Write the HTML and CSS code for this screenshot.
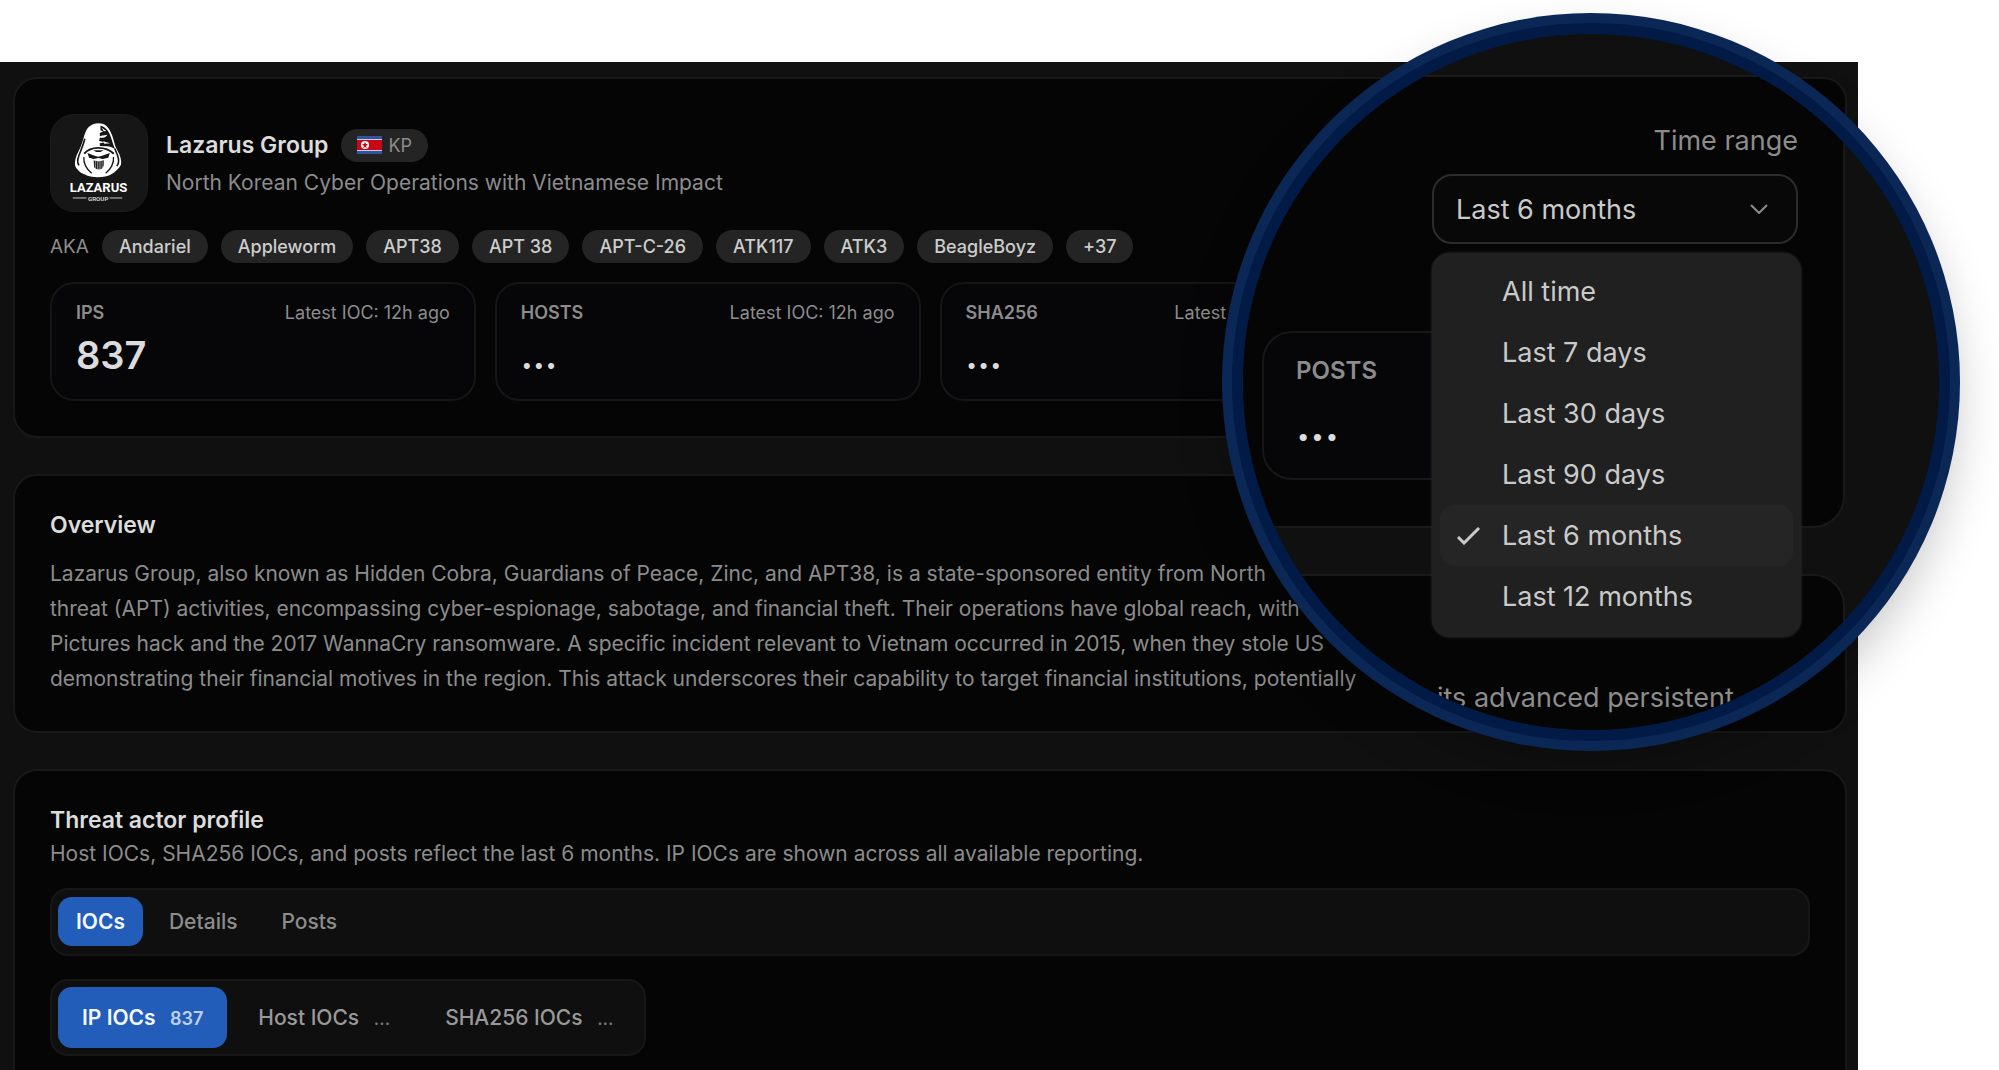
FILE: index.html
```html
<!DOCTYPE html>
<html lang="en">
<head>
  <meta charset="utf-8">
  <title>Lazarus Group</title>
  <link rel="stylesheet" href="styles.css">
</head>
<body>
  <main class="panel">
    <section class="card">
      <div class="actor">
        <div class="avatar">
          <svg viewBox="30 27 295 295" role="img" aria-label="Lazarus Group logo">
            <path fill="#fff" d="M176 52c-22 0-36 12-43 36-5 19-9 32-18 50-9 16-13 32-11 44 4 12 16 22 30 28 10 6 24 8 40 8s30-2 40-8c14-8 25-18 31-30 3-14-2-28-11-44-9-15-10-30-16-46-9-25-20-38-42-38z"/>
            <path fill="#161616" d="M182 60c15 3 24 14 31 32 5 14 8 26 14 40-8-6-16-8-26-9l-21-1v-8l16-3-18-4 2-10 14-2-14-4v-9l10-4-8-4z"/>
            <path fill="#fff" d="M186 66l14 10-8 1zM184 91l20-3-8 7-12 2zM190 108l22 6-18 1z"/>
            <path fill="none" stroke="#161616" stroke-width="5" d="M134 100c-6 22-14 40-19 54-4 10-4 20 1 28"/>
            <path fill="none" stroke="#161616" stroke-width="5" d="M226 130c5 12 9 20 11 30 2 10 0 18-5 24"/>
            <path fill="none" stroke="#161616" stroke-width="6" d="M132 146c10-12 24-18 43-18s36 6 48 18"/>
            <path fill="#161616" d="M142 144l22 8 11 3 12-3 24-8-5 14-17 4-14-3-14 3-14-4zM160 135h32l-10 6h-13z"/>
            <path fill="#888" d="M160 166l16 3 17-3-3 22-7 6h-13l-7-6z"/>
            <path fill="none" stroke="#161616" stroke-width="3" d="M164 168v20M170 169v24M177 170v24M184 169v24M190 167v18"/>
            <path fill="none" stroke="#161616" stroke-width="4" d="M131 156c-2 18 8 38 24 50M222 156c2 18-8 38-24 50"/>
            <path stroke="#ccc" stroke-width="3" d="M97 282h42M210 282h39"/>
            <text class="logo-name" x="176" y="265" text-anchor="middle">LAZARUS</text>
            <text class="logo-sub" x="175" y="290" text-anchor="middle">GROUP</text>
          </svg>
        </div>
        <div>
          <div class="name-row">
            <h1>Lazarus Group</h1>
            <span class="country">
              <svg class="flag" viewBox="0 0 25 18" aria-hidden="true">
                <path fill="#3153a0" d="M0 0h25v18H0z"/>
                <path fill="#c9cedd" d="M0 3h25v12H0z"/>
                <path fill="#c80815" d="M0 4h25v10H0z"/>
                <circle cx="8" cy="9" r="4" fill="#fff"/>
                <path fill="#c80815" d="M8 6l1 2h2l-2 2 1 2-2-1-2 1 1-2-2-2h2z"/>
              </svg>
              KP
            </span>
          </div>
          <p class="tagline">North Korean Cyber Operations with Vietnamese Impact</p>
        </div>
      </div>

      <div class="aliases">
        <span class="aka">AKA</span>
        <span class="chip">Andariel</span>
        <span class="chip">Appleworm</span>
        <span class="chip">APT38</span>
        <span class="chip">APT 38</span>
        <span class="chip">APT-C-26</span>
        <span class="chip">ATK117</span>
        <span class="chip">ATK3</span>
        <span class="chip">BeagleBoyz</span>
        <span class="chip">+37</span>
      </div>

      <div class="stats">
        <div class="stat">
          <div class="stat-head"><b>IPS</b><span>Latest IOC: 12h ago</span></div>
          <div class="stat-value">837</div>
        </div>
        <div class="stat">
          <div class="stat-head"><b>HOSTS</b><span>Latest IOC: 12h ago</span></div>
          <div class="stat-value">...</div>
        </div>
        <div class="stat">
          <div class="stat-head"><b>SHA256</b><span>Latest IOC: 12h ago</span></div>
          <div class="stat-value">...</div>
        </div>
        <div class="stat"></div>
      </div>
    </section>

    <section class="card">
      <h2>Overview</h2>
      <p class="overview">
        Lazarus Group, also known as Hidden Cobra, Guardians of Peace, Zinc, and APT38, is a state-sponsored entity from North<br>
        threat (APT) activities, encompassing cyber-espionage, sabotage, and financial theft. Their operations have global reach, with<br>
        Pictures hack and the 2017 WannaCry ransomware. A specific incident relevant to Vietnam occurred in 2015, when they stole US<br>
        demonstrating their financial motives in the region. This attack underscores their capability to target financial institutions, potentially
      </p>
    </section>

    <section class="card card-last">
      <h2>Threat actor profile</h2>
      <p class="note">Host IOCs, SHA256 IOCs, and posts reflect the last 6 months. IP IOCs are shown across all available reporting.</p>
      <div class="tabs">
        <button class="tab active">IOCs</button>
        <button class="tab">Details</button>
        <button class="tab">Posts</button>
      </div>
      <div class="subtabs">
        <button class="subtab active">IP IOCs <span>837</span></button>
        <button class="subtab">Host IOCs <span>...</span></button>
        <button class="subtab">SHA256 IOCs <span>...</span></button>
      </div>
    </section>
  </main>

  <!-- magnifier over the time range filter -->
  <aside class="lens">
    <div class="lens-view">
      <div class="lens-card">
        <div class="range">
          <label for="range">Time range</label>
          <div class="select-wrap">
            <select id="range">
              <option>All time</option>
              <option>Last 7 days</option>
              <option>Last 30 days</option>
              <option>Last 90 days</option>
              <option selected>Last 6 months</option>
              <option>Last 12 months</option>
            </select>
            <svg class="chevron" viewBox="0 0 18 10" aria-hidden="true"><path d="M1 1l8 8 8-8"/></svg>
            <ul class="menu">
              <li>All time</li>
              <li>Last 7 days</li>
              <li>Last 30 days</li>
              <li>Last 90 days</li>
              <li class="picked">
                <svg class="check" viewBox="0 0 24 18" aria-hidden="true"><path d="M1 10l6 6L22 1"/></svg>
                Last 6 months
              </li>
              <li>Last 12 months</li>
            </ul>
          </div>
        </div>
        <div class="lens-stat">
          <b>POSTS</b>
          <div class="lens-value">...</div>
        </div>
      </div>
      <div class="lens-card">
        <p>its advanced persistent</p>
      </div>
    </div>
  </aside>
</body>
</html>
```
FILE: styles.css
```css
* { box-sizing: border-box; }

body {
  margin: 0;
  min-height: 100vh;
  position: relative;
  display: flex;
  flex-direction: column;
  overflow: hidden;
  background: #fff;
  color: #dcdcdc;
  font-family: Inter, "Liberation Sans", sans-serif;
}
h1, h2, p, ul { margin: 0; }
button, select { font-family: inherit; }

.panel {
  flex: 1;
  margin: 62px 141px 0 0;
  padding: 15px 11px 0 13px;
  display: flex;
  flex-direction: column;
  gap: 36px;
  background: #101010;
}
.card {
  padding: 35px;
  background: #050505;
  border: 2px solid #181818;
  border-radius: 24px;
}
.card-last { flex: 1; padding-bottom: 12px; border-bottom: 0; border-radius: 24px 24px 0 0; }

h1, h2 { font-size: 23px; line-height: 28px; font-weight: 600; }

.actor { display: flex; align-items: center; gap: 18px; }
.avatar { width: 98px; height: 98px; background: #161616; border: 1px solid #1b1b1b; border-radius: 24px; }
.avatar svg { display: block; width: 96px; height: 96px; }
.logo-name { font: bold 40px Roboto, sans-serif; fill: #fff; }
.logo-sub { font: bold 19px Roboto, sans-serif; fill: #ccc; }

.name-row { display: flex; align-items: center; gap: 13px; padding-top: 2px; }
.country {
  display: flex;
  align-items: center;
  gap: 6px;
  height: 33px;
  padding: 0 16px;
  border-radius: 17px;
  background: #242424;
  color: #8c8c8c;
  font-size: 18px;
}
.flag { width: 25px; height: 18px; }
.tagline { color: #8c8c8c; font-size: 21px; line-height: 34px; margin-top: 4px; }

.aliases { display: flex; align-items: center; gap: 13px; margin-top: 18px; }
.aka { color: #8c8c8c; font-size: 19px; }
.chip {
  padding: 0 17px;
  line-height: 33px;
  border-radius: 17px;
  background: #242424;
  color: #cdcdcd;
  font-size: 18px;
  font-weight: 500;
}

.stats { display: grid; grid-template-columns: repeat(4, 1fr); gap: 19px; margin-top: 19px; }
.stat { height: 119px; padding: 17px 24px; background: #060608; border: 2px solid #151515; border-radius: 24px; }
.stat-head { display: flex; justify-content: space-between; color: #8c8c8c; font-size: 18px; line-height: 24px; }
.stat-head b { font-weight: 600; }
.stat-value { margin-top: 8px; font-size: 38px; line-height: 44px; font-weight: 600; }

.overview { margin-top: 17px; color: #8c8c8c; font-size: 21px; line-height: 35px; white-space: nowrap; }
.note { margin-top: 2px; color: #8c8c8c; font-size: 21px; line-height: 36px; }

.tabs, .subtabs { display: flex; background: #0f0f0f; border: 2px solid #171717; border-radius: 18px; }
.tabs { margin-top: 16px; padding: 7px 6px 8px; gap: 8px; }
.subtabs { margin-top: 23px; padding: 6px; gap: 7px; width: fit-content; }
.tab, .subtab {
  border: 0;
  border-radius: 14px;
  background: none;
  color: #8c8c8c;
  font-size: 21px;
  font-weight: 500;
}
.tab { height: 49px; padding: 0 18px; }
.subtab { height: 61px; padding: 0 24px; color: #999; }
.subtab span { margin-left: 9px; font-size: 18px; opacity: 0.75; }
.tab.active, .subtab.active { background: #215db9; color: #f4f7fc; font-weight: 600; }

.lens {
  position: absolute;
  top: 13px;
  right: 39px;
  width: 738px;
  height: 738px;
  padding: 10px;
  border-radius: 50%;
  background: #0b2756;
  box-shadow: 0 22px 50px -6px rgba(0, 0, 0, 0.24);
}
.lens-view {
  height: 100%;
  padding: 41px 94px 0 18px;
  overflow: hidden;
  border: 11px solid #011a46;
  border-radius: 50%;
  background: #101010;
  font-size: 27px;
}
.lens-card {
  height: 453px;
  margin-left: -60px;
  padding: 30px 45px 0 59px;
  background: #050505;
  border: 2px solid #191919;
  border-radius: 32px;
}
.lens-card + .lens-card { margin-top: 46px; padding-top: 105px; padding-left: 234px; color: #8c8c8c; white-space: nowrap; }
.range { width: 366px; margin-left: auto; text-align: right; }
.range label { display: block; color: #8c8c8c; line-height: 67px; }
.select-wrap { position: relative; text-align: left; }
select {
  display: block;
  width: 100%;
  height: 70px;
  padding: 0 22px;
  appearance: none;
  background: #080808;
  border: 2px solid #2c2c2c;
  border-radius: 20px;
  color: #cacaca;
  font-size: 27px;
}
.chevron { position: absolute; top: 30px; right: 30px; width: 18px; height: 10px; }
.chevron path { fill: none; stroke: #8c8c8c; stroke-width: 2; }
.menu {
  position: absolute;
  top: 79px;
  left: 0;
  width: 369px;
  padding: 8px 8px 10px;
  list-style: none;
  background: #202020;
  border-radius: 18px;
  color: #cacaca;
  box-shadow: 0 0 3px #333;
}
.menu li { position: relative; padding-left: 62px; line-height: 61px; border-radius: 14px; }
.menu .picked { background: #252525; }
.check { position: absolute; top: 22px; left: 17px; width: 24px; height: 18px; }
.check path { fill: none; stroke: #cacaca; stroke-width: 3; }

.lens-stat {
  width: 419px;
  height: 149px;
  margin-top: 87px;
  padding: 22px 32px;
  background: #060608;
  border: 2px solid #171717;
  border-radius: 30px;
}
.lens-stat b { display: block; color: #8c8c8c; font-size: 24px; line-height: 32px; font-weight: 600; }
.lens-value { margin-top: 10px; font-size: 45px; line-height: 56px; font-weight: 600; }
```
